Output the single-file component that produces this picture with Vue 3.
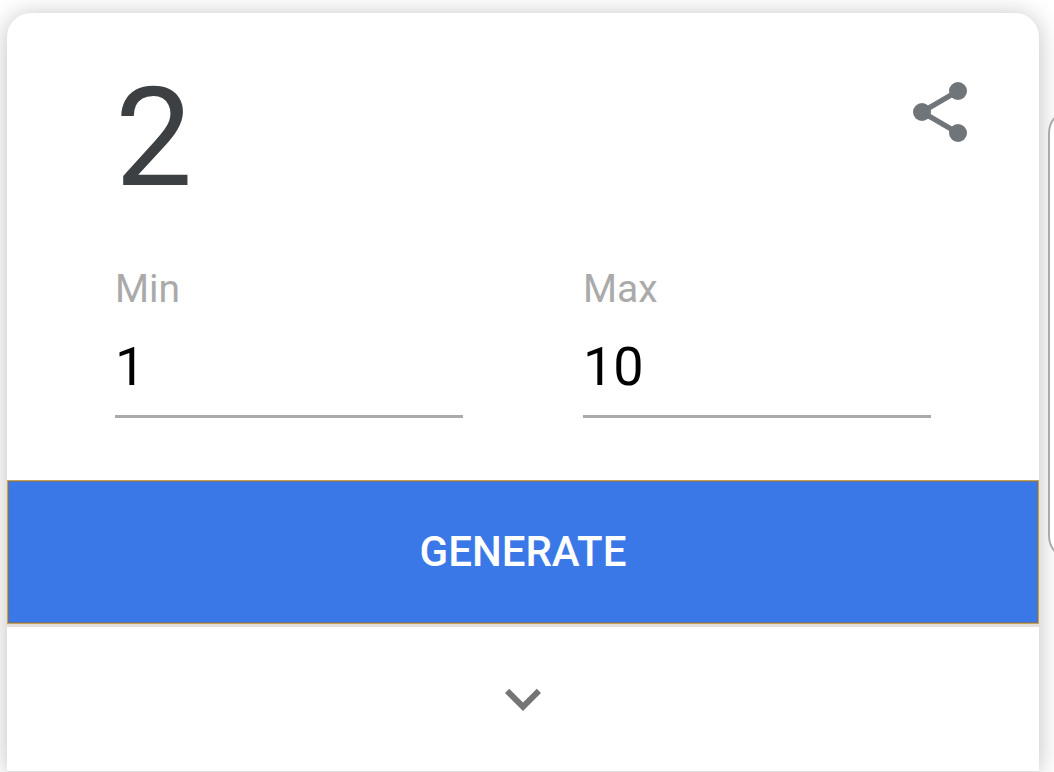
<script setup>
import { ref } from 'vue'

const min = ref('1')
const max = ref('10')
const result = ref(2)
const expanded = ref(false)

function generate() {
  const low = Math.ceil(Number(min.value))
  const high = Math.floor(Number(max.value))
  if (high >= low) {
    result.value = low + Math.floor(Math.random() * (high - low + 1))
  }
}
</script>

<template>
  <div class="page">
    <main class="card">
      <header class="head">
        <output class="result" for="min max">{{ result }}</output>
        <button class="icon-button share" type="button" aria-label="Share">
          <svg viewBox="0 0 24 24" aria-hidden="true">
            <path d="M18 5 6 12l12 7" fill="none" stroke="currentColor" stroke-width="1.8" />
            <circle cx="18" cy="5" r="3" />
            <circle cx="6" cy="12" r="3" />
            <circle cx="18" cy="19" r="3" />
          </svg>
        </button>
      </header>

      <div class="fields">
        <div class="field">
          <label for="min">Min</label>
          <input id="min" v-model="min" type="text" inputmode="numeric" />
        </div>
        <div class="field">
          <label for="max">Max</label>
          <input id="max" v-model="max" type="text" inputmode="numeric" />
        </div>
      </div>

      <button class="generate" type="button" @click="generate">GENERATE</button>

      <div class="more">
        <button
          class="icon-button expand"
          type="button"
          aria-label="Show more tools"
          :aria-expanded="expanded"
          @click="expanded = !expanded"
        >
          <svg viewBox="0 0 24 24" aria-hidden="true">
            <path d="M16.59 8.59 12 13.17 7.41 8.59 6 10l6 6 6-6z" />
          </svg>
        </button>
      </div>
    </main>

    <aside class="next" aria-hidden="true">
      <div class="next-card"></div>
    </aside>
  </div>
</template>

<style>
body {
  margin: 0;
  background: #fff;
}
</style>

<style scoped>
.page {
  box-sizing: border-box;
  display: grid;
  grid-template-columns: minmax(0, 1fr) 6px;
  column-gap: 9px;
  padding: 13px 0 0 7px;
  overflow: hidden;
  font-family: Roboto, "Liberation Sans", sans-serif;
}

.card {
  border-bottom: 1px solid #e0e0e0;
  border-radius: 24px 24px 0 0;
  background: #fff;
  box-shadow: 0 2px 24px rgba(0, 0, 0, 0.25);
}

.head {
  display: flex;
  justify-content: space-between;
  align-items: flex-start;
  padding: 55px 63px 0 108px;
}

.result {
  font-size: 138px;
  line-height: 140px;
  color: #3c4043;
}

.icon-button {
  display: block;
  width: 72px;
  height: 72px;
  padding: 0;
  border: 0;
  background: none;
  cursor: pointer;
}

.icon-button svg {
  display: block;
  width: 100%;
  height: 100%;
  fill: currentColor;
}

.share {
  margin-top: 8px;
  color: #70757a;
}

.expand {
  color: #757575;
}

.fields {
  display: grid;
  grid-template-columns: repeat(2, minmax(0, 1fr));
  column-gap: 120px;
  padding: 58px 108px 62px;
}

.field {
  display: flex;
  flex-direction: column;
  gap: 23px;
}

.field label {
  font-size: 39px;
  line-height: 46px;
  color: #aaa;
}

.field input {
  box-sizing: border-box;
  width: 100%;
  height: 83px;
  padding: 0 0 18px;
  border: 0;
  border-bottom: 3px solid #aaa;
  border-radius: 0;
  outline: 0;
  background: none;
  font-family: inherit;
  font-size: 54px;
  line-height: 62px;
  color: #000;
}

.generate {
  display: block;
  width: 100%;
  height: 144px;
  padding: 0 0 2px;
  border: 1px solid #c4a052;
  background: #3b78e7;
  box-shadow: inset 0 0 0 1px #70747c, 0 3px 0 #e4dfdb;
  font-family: inherit;
  font-size: 42px;
  font-weight: 500;
  color: #fff;
  cursor: pointer;
}

.more {
  display: flex;
  justify-content: center;
  margin-top: 3px;
  padding: 36px 0;
}

.next {
  position: relative;
  overflow: hidden;
  padding-top: 96px;
}

.next-card {
  box-sizing: border-box;
  width: 120px;
  height: 451px;
  border: 2px solid #aaa;
  border-radius: 24px;
  background: #fff;
}
</style>
